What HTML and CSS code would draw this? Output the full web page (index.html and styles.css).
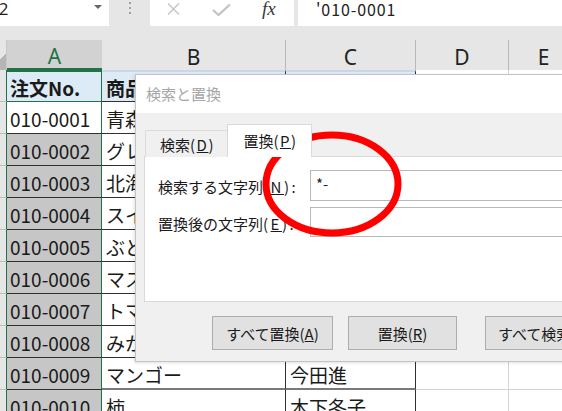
FILE: index.html
```html
<!DOCTYPE html>
<html lang="ja">
<head>
<meta charset="utf-8">
<title>検索と置換</title>
<link rel="stylesheet" href="styles.css">
</head>
<body>
<div class="topbar">
  <div class="namebox"><span class="nb-text">A2</span><span class="nb-arrow"></span></div>
  <div class="grip"><i></i><i></i><i></i></div>
  <div class="fx-tools">
    <svg class="ic-x" width="16" height="12" viewBox="0 0 16 12"><path d="M2 0.5 L13 11.5 M13 0.5 L2 11.5" stroke="#c3c3c3" stroke-width="1.3" fill="none"/></svg>
    <svg class="ic-ok" width="19" height="12" viewBox="0 0 19 12"><path d="M1 6 L6.5 11 L18 0.5" stroke="#c3c3c3" stroke-width="2.2" fill="none"/></svg>
    <span class="fx">fx</span>
  </div>
  <div class="fx-gap"></div>
  <div class="formula">'010-0001</div>
</div>
<div class="gap"></div>
<div class="sheet">
  <div class="corner"></div><div class="ch sel">A</div><div class="ch">B</div><div class="ch">C</div><div class="ch">D</div><div class="ch">E</div>

  <div class="rh"></div><div class="c ca hd">注文No.</div><div class="c t hd">商品名</div><div class="c t hd">担当者</div><div class="c g"></div><div class="c g"></div>
  <div class="rh"></div><div class="c ca act">010-0001</div><div class="c t">青森りんご</div><div class="c t">佐藤一郎</div><div class="c g"></div><div class="c g"></div>
  <div class="rh"></div><div class="c ca">010-0002</div><div class="c t">グレープ</div><div class="c t">鈴木花子</div><div class="c g"></div><div class="c g"></div>
  <div class="rh"></div><div class="c ca">010-0003</div><div class="c t">北海道メロン</div><div class="c t">高橋健</div><div class="c g"></div><div class="c g"></div>
  <div class="rh"></div><div class="c ca">010-0004</div><div class="c t">スイカ</div><div class="c t">田中誠</div><div class="c g"></div><div class="c g"></div>
  <div class="rh"></div><div class="c ca">010-0005</div><div class="c t">ぶどう</div><div class="c t">伊藤美咲</div><div class="c g"></div><div class="c g"></div>
  <div class="rh"></div><div class="c ca">010-0006</div><div class="c t">マスカット</div><div class="c t">渡辺修</div><div class="c g"></div><div class="c g"></div>
  <div class="rh"></div><div class="c ca">010-0007</div><div class="c t">トマト</div><div class="c t">山本大輔</div><div class="c g"></div><div class="c g"></div>
  <div class="rh"></div><div class="c ca">010-0008</div><div class="c t">みかん</div><div class="c t">中村優子</div><div class="c g"></div><div class="c g"></div>
  <div class="rh"></div><div class="c ca">010-0009</div><div class="c t thick">マンゴー</div><div class="c t thick">今田進</div><div class="c g"></div><div class="c g"></div>
  <div class="rh"></div><div class="c ca">010-0010</div><div class="c t">柿</div><div class="c t">木下冬子</div><div class="c g"></div><div class="c g"></div>
</div>

<div class="dialog">
  <div class="dlg-title">検索と置換</div>
  <div class="dlg-body">
    <div class="tabs">
      <div class="tab">検索<span class="mn">(<u>D</u>)</span></div>
      <div class="tab sel">置換<span class="mn">(<u>P</u>)</span></div>
    </div>
    <div class="panel">
      <div class="frow">
        <div class="flabel">検索する文字列<span class="mn">(<u>N</u>):</span></div>
        <div class="finput">*-</div>
      </div>
      <div class="frow r2">
        <div class="flabel">置換後の文字列<span class="mn">(<u>E</u>):</span></div>
        <div class="finput"></div>
      </div>
    </div>
    <div class="buttons">
      <div class="btn b1">すべて置換(<u>A</u>)</div>
      <div class="btn b2">置換(<u>R</u>)</div>
      <div class="btn b3">すべて検索(<u>I</u>)</div>
    </div>
  </div>
</div>

<svg class="mark" width="160" height="120" viewBox="0 0 160 120"><ellipse cx="77" cy="59" rx="66" ry="49" fill="none" stroke="#ff0000" stroke-width="7"/></svg>
</body>
</html>
```

FILE: styles.css
```css
html, body {
  margin: 0;
  padding: 0;
}
body {
  width: 562px;
  height: 411px;
  overflow: hidden;
  position: relative;
  background: #ffffff;
  font-family: "Noto Sans CJK JP", "Noto Sans", sans-serif;
  color: #000;
}

/* formula bar */
.topbar {
  display: flex;
  height: 26px;
  background: #e6e6e6;
}
.namebox {
  width: 109px;
  background: #fff;
  position: relative;
  overflow: hidden;
}
.nb-text {
  display: block;
  margin-left: -12px;
  font-family: "Open Sans", sans-serif;
  font-size: 17px;
  line-height: 18px;
  color: #222;
}
.nb-arrow {
  position: absolute;
  left: 94px;
  top: 5px;
  width: 0;
  height: 0;
  border-left: 4px solid transparent;
  border-right: 4px solid transparent;
  border-top: 4px solid #666;
}
.grip {
  width: 41px;
  display: flex;
  flex-direction: column;
  align-items: center;
  padding-top: 2px;
  gap: 3px;
  box-sizing: border-box;
}
.grip i {
  display: block;
  width: 2px;
  height: 2px;
  background: #a0a0a0;
}
.fx-tools {
  width: 144px;
  background: #fff;
  display: flex;
  align-items: flex-start;
  padding-top: 3px;
  box-sizing: border-box;
}
.ic-x { margin-left: 16px; }
.ic-ok { margin-left: 30px; margin-top: 1px; }
.fx {
  margin-left: 31px;
  margin-top: -4px;
  font-family: "Liberation Serif", serif;
  font-style: italic;
  font-size: 19px;
  color: #3a3a3a;
  line-height: 20px;
}
.fx-gap {
  width: 4px;
}
.formula {
  flex: 1;
  background: #fff;
  padding-left: 18px;
  font-size: 16px;
  letter-spacing: 0.9px;
  line-height: 18px;
  color: #222;
}
.gap {
  height: 14px;
  background: #e6e6e6;
}

/* sheet */
.sheet {
  display: grid;
  grid-template-columns: 7px 95px 184px 130px 93px 70px;
  grid-template-rows: 30px repeat(11, 32px);
}
.corner {
  background: #e6e6e6;
  border-right: 1px solid #c8c8c8;
  box-sizing: border-box;
  background-image: linear-gradient(135deg, transparent 55%, #b5b5b5 55%);
}
.ch {
  background: #e6e6e6;
  border-right: 1px solid #b8b8b8;
  box-sizing: border-box;
  font-family: "Noto Sans", sans-serif;
  font-size: 21px;
  color: #222;
  display: flex;
  align-items: center;
  justify-content: center;
  padding-top: 3px;
}
.ch.sel {
  background: #d2d2d2;
  color: #217346;
  border-right: none;
  border-bottom: 2px solid #217346;
}
.rh {
  background: #e6e6e6;
  border-bottom: 1px solid #bdbdbd;
  border-right: 1px solid #217346;
  box-sizing: border-box;
}
.c {
  box-sizing: border-box;
  font-size: 19px;
  padding: 2px 4px 0 4px;
  display: flex;
  align-items: center;
  white-space: nowrap;
  overflow: hidden;
  border-right: 1px solid #d4d4d4;
  border-bottom: 1px solid #d4d4d4;
}
.ca {
  background: #c6c6c6;
  border-right: 1px solid #217346;
  border-bottom: 1px solid #303030;
  padding-left: 3px;
  color: #1a1a1a;
}
.ca.act {
  background: #fff;
}
.ca.hd {
  border-top: 2px solid #217346;
  border-bottom: 1px solid #217346;
}
.hd {
  background: #ddebf7;
  font-weight: bold;
}
.t {
  border-right: 1px solid #303030;
  border-bottom: 1px solid #303030;
  color: #1a1a1a;
}
.t.hd {
  border-top: 2px solid #c8d8ea;
}
.t.thick {
  border-bottom: 2px solid #7a7a7a;
}
.g {
  background: #fff;
}

/* dialog */
.dialog {
  position: absolute;
  left: 135px;
  top: 74px;
  width: 440px;
  height: 288px;
  background: #f0f0f0;
  border: 1px solid #c4c4c4;
  box-sizing: border-box;
  box-shadow: -1px 1px 3px rgba(0, 0, 0, 0.12);
}
.dlg-title {
  height: 38px;
  background: #fff;
  padding-left: 10px;
  font-size: 15px;
  line-height: 38px;
  color: #a6a6a6;
}
.dlg-body {
  padding: 11px 0 0 8px;
}
.tabs {
  display: flex;
  align-items: flex-end;
  height: 33px;
  margin-bottom: -1px;
  margin-left: 1px;
  position: relative;
  z-index: 1;
}
.mn {
  letter-spacing: 2.5px;
}
.tab {
  width: 82px;
  height: 27px;
  flex-shrink: 0;
  box-sizing: border-box;
  border: 1px solid #dcdcdc;
  border-bottom: none;
  border-right: none;
  background: #f0f0f0;
  font-size: 15px;
  color: #1a1a1a;
  display: flex;
  align-items: center;
  justify-content: center;
  padding-left: 2px;
}
.tab .mn {
  letter-spacing: 1.5px;
}
.tab.sel {
  width: 85px;
  height: 33px;
  background: #fff;
  border-right: 1px solid #d9d9d9;
  border-color: #d9d9d9;
  padding-bottom: 1px;
}
.panel {
  height: 146px;
  border: 1px solid #d9d9d9;
  background: #fff;
  box-sizing: border-box;
  padding: 13px 0 0 13px;
}
.frow {
  display: flex;
  align-items: center;
  height: 31px;
  margin-bottom: 6px;
}
.frow.r2 {
  height: 30px;
}
.flabel {
  width: 152px;
  flex-shrink: 0;
  font-size: 15px;
  color: #1a1a1a;
  padding-top: 2px;
  white-space: nowrap;
}
.finput {
  flex: 1;
  align-self: stretch;
  border: 1px solid #b8b8b8;
  box-sizing: border-box;
  font-size: 15px;
  padding-left: 5px;
  line-height: 26px;
  color: #222;
}
.buttons {
  display: flex;
  margin: 14px 0 0 68px;
}
.btn {
  height: 34px;
  flex-shrink: 0;
  border: 1px solid #adadad;
  background: #e1e1e1;
  box-sizing: border-box;
  font-size: 15px;
  color: #1a1a1a;
  display: flex;
  align-items: center;
  justify-content: center;
  white-space: nowrap;
}
.b1 { width: 121px; }
.b2 { width: 109px; margin-left: 15px; }
.b3 { width: 130px; margin-left: 28px; justify-content: flex-start; padding-left: 12px; }

.mark {
  position: absolute;
  left: 255px;
  top: 125px;
}
```
